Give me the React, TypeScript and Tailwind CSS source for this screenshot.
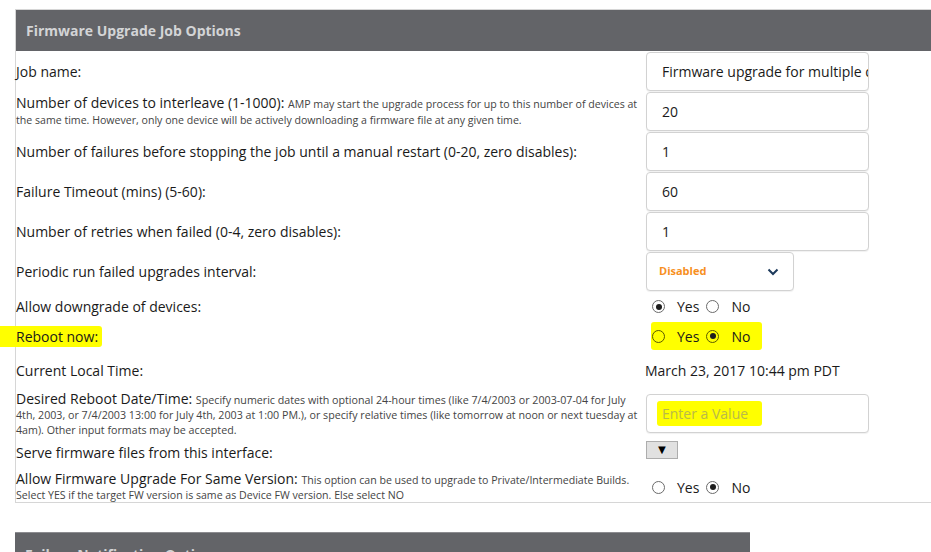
import React from "react";

const font = "font-['Open_Sans','Liberation_Sans',sans-serif]";

function Radio({ checked, marked }: { checked?: boolean; marked?: boolean }) {
  return (
    <span
      className={`flex h-[13px] w-[13px] shrink-0 items-center justify-center rounded-full border ${
        marked ? "border-[#5a5a00] bg-transparent" : "border-[#6b6b6b] bg-white"
      }`}
    >
      {checked ? <span className="h-[6px] w-[6px] rounded-full bg-[#1e1e1e]" /> : null}
    </span>
  );
}

function YesNo({ yes, marked }: { yes: boolean; marked?: boolean }) {
  return (
    <span
      className={`inline-flex items-center text-[14px] text-[#1a1a1a] ${
        marked ? "ml-[5px] h-[28px] w-[111px] rounded-[3px] bg-[#ffff00] pl-[1px]" : "h-[28px] pl-[6px]"
      }`}
    >
      <Radio checked={yes} marked={marked} />
      <span className="ml-[12px]">Yes</span>
      <span className="ml-[7px]">
        <Radio checked={!yes} marked={marked} />
      </span>
      <span className="ml-[12px]">No</span>
    </span>
  );
}

function TextBox({ value }: { value: string }) {
  return (
    <div className="flex h-[39px] w-[223px] items-center overflow-hidden whitespace-nowrap rounded-[4px] border border-[#d2d2d2] bg-white pl-[15px] text-[14px] text-[#1a1a1a] shadow-[0_1px_1px_rgba(0,0,0,0.06)]">
      {value}
    </div>
  );
}

function Row({
  h,
  label,
  children,
}: {
  h: string;
  label: React.ReactNode;
  children: React.ReactNode;
}) {
  return (
    <div className={`grid grid-cols-[630px_1fr] items-center ${h}`}>
      <div className="text-[14px] leading-[15px] text-[#1a1a1a]">{label}</div>
      <div className="flex items-center">{children}</div>
    </div>
  );
}

function Note({ children, size = "text-[10.6px]" }: { children: React.ReactNode; size?: string }) {
  return <span className={`${size} leading-[14px] text-[#444]`}>{children}</span>;
}

export default function App() {
  return (
    <div className={`h-[552px] w-[931px] overflow-hidden bg-white ${font}`}>
      <div className="pl-[15px] pt-[9px]">
        <section className="w-[980px] border-b border-l border-t border-[#d6d6d6]">
          <h2 className="flex h-[41px] items-center bg-[#636468] pl-[10px] text-[14px] font-bold text-[#d3d4d6]">
            Firmware Upgrade Job Options
          </h2>

          <Row h="h-[40px]" label="Job name:">
            <TextBox value="Firmware upgrade for multiple devices" />
          </Row>
          <Row
            h="h-[40px]"
            label={
              <>
                Number of devices to interleave (1-1000):{" "}
                <Note>
                  AMP may start the upgrade process for up to this number of devices at the same
                  time. However, only one device will be actively downloading a firmware file at
                  any given time.
                </Note>
              </>
            }
          >
            <TextBox value="20" />
          </Row>
          <Row
            h="h-[40px]"
            label="Number of failures before stopping the job until a manual restart (0-20, zero disables):"
          >
            <TextBox value="1" />
          </Row>
          <Row h="h-[40px]" label="Failure Timeout (mins) (5-60):">
            <TextBox value="60" />
          </Row>
          <Row h="h-[40px]" label="Number of retries when failed (0-4, zero disables):">
            <TextBox value="1" />
          </Row>
          <Row h="h-[41px]" label="Periodic run failed upgrades interval:">
            <div className="flex h-[39px] w-[148px] items-center justify-between rounded-[4px] border border-[#d2d2d2] bg-white pl-[12px] pr-[14px] shadow-[0_1px_1px_rgba(0,0,0,0.06)]">
              <span className="text-[11px] font-bold text-[#f7901e]">Disabled</span>
              <svg width="12" height="8" viewBox="0 0 12 8" fill="none">
                <path d="M1.5 1.5 6 6l4.5-4.5" stroke="#1d3a5c" strokeWidth="2" />
              </svg>
            </div>
          </Row>
          <Row h="h-[29px]" label="Allow downgrade of devices:">
            <YesNo yes />
          </Row>
          <Row
            h="h-[30px]"
            label={
              <span className="-ml-[16px] inline-block rounded-r-[3px] bg-[#ffff00] py-[3px] pl-[16px] pr-[4px]">
                Reboot now:
              </span>
            }
          >
            <YesNo yes={false} marked />
          </Row>
          <Row h="h-[38px]" label="Current Local Time:">
            <span className="-ml-[1px] text-[14px] text-[#1a1a1a]">March 23, 2017 10:44 pm PDT</span>
          </Row>
          <Row
            h="h-[43px] pt-[3px]"
            label={
              <span className="block w-[640px] leading-[14px]">
                Desired Reboot Date/Time:{" "}
                <Note size="text-[10.7px]">
                  Specify numeric dates with optional 24-hour times (like 7/4/2003 or 2003-07-04 for
                  July
                  <br />
                  4th, 2003, or 7/4/2003 13:00 for July 4th, 2003 at 1:00 PM.), or specify relative
                  times (like tomorrow at noon or next tuesday at
                  <br />
                  4am). Other input formats may be accepted.
                </Note>
              </span>
            }
          >
            <div className="-mt-[3px] flex h-[39px] w-[223px] items-center rounded-[4px] border border-[#d2d2d2] bg-white pl-[10px] shadow-[0_1px_1px_rgba(0,0,0,0.06)]">
              <span className="rounded-[3px] bg-[#ffff00] px-[5px] py-[2px] pr-[14px] text-[14px] text-[#b9b94a]">
                Enter a Value
              </span>
            </div>
          </Row>
          <Row h="h-[35px] pt-[5px]" label="Serve firmware files from this interface:">
            <button className="-mt-[5px] flex h-[18px] w-[32px] items-center justify-center border border-[#adadad] bg-[#e1e1e1] text-[13px] leading-none text-black">
              ▼
            </button>
          </Row>
          <Row
            h="h-[35px] pt-[5px]"
            label={
              <span className="block leading-[14px]">
                Allow Firmware Upgrade For Same Version:{" "}
                <Note>
                  This option can be used to upgrade to Private/Intermediate Builds. Select YES if
                  the target FW version is same as Device FW version. Else select NO
                </Note>
              </span>
            }
          >
            <YesNo yes={false} />
          </Row>
        </section>

        <section className="mt-[29px] w-[735px] border-t border-[#8c8c90] bg-[#636468]">
          <h2 className="h-[40px] pl-[10px] pt-[11px] text-[14px] font-bold text-[#d3d4d6]">
            Failure Notification Options
          </h2>
        </section>
      </div>
    </div>
  );
}
